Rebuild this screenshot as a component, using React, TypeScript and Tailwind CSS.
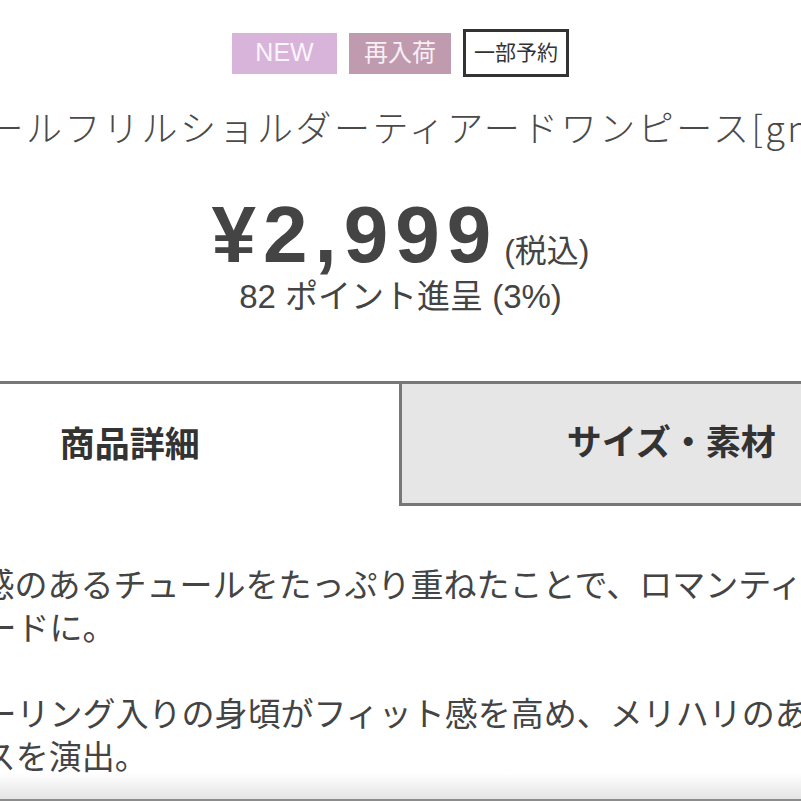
export default function App() {
  const font = { fontFamily: '"Liberation Sans", "Noto Sans CJK JP", sans-serif' };
  return (
    <div className="relative w-[801px] h-[801px] overflow-hidden bg-white flex flex-col items-center" style={font}>
      <div className="w-[1080px] shrink-0 flex flex-col items-center">
        <div className="flex items-center gap-[12px] mt-[29px] h-[48px]">
          <span className="w-[105px] h-[41px] bg-[#d8b3da] text-[#fbf5fc] text-[25px] flex items-center justify-center">NEW</span>
          <span className="w-[102px] h-[41px] bg-[#c09aae] text-[#f7eff3] text-[24px] flex items-center justify-center">再入荷</span>
          <span className="w-[106px] h-[48px] border-[3px] border-[#333] text-[#333] text-[21px] flex items-center justify-center">一部予約</span>
        </div>
        <div
          className="self-stretch pl-[50px] whitespace-nowrap text-[36px] font-light text-[#4a4a4a] leading-[48px] mt-[25px] tracking-[2.5px]"
          style={{ fontFamily: '"Noto Sans CJK JP", sans-serif' }}
        >
          チュールフリルショルダーティアードワンピース[gnc]
        </div>
        <div className="flex items-baseline justify-center mt-[45px] text-[#444]">
          <span className="text-[80px] font-bold leading-[80px] tracking-[7px]">¥2,999</span>
          <span className="text-[32px] ml-[6px]">(税込)</span>
        </div>
        <div className="text-[33px] text-[#444] leading-[40px] mt-[2px]">82 ポイント進呈 (3%)</div>
        <div className="self-stretch flex border-t-[3px] border-[#777] mt-[64px]">
          <div className="flex-1 h-[122px] bg-white flex items-center justify-center text-[35px] font-bold text-[#333]">商品詳細</div>
          <div className="flex-1 h-[122px] bg-[#e6e6e6] border-l-[3px] border-b-[3px] border-[#777] flex items-center justify-center text-[35px] font-bold text-[#333]">サイズ・素材</div>
        </div>
        <div
          className="self-stretch px-[24px] mt-[56px] text-[33px] leading-[43px] text-[#444] whitespace-nowrap"
          style={{ fontFamily: '"Noto Sans CJK JP", sans-serif' }}
        >
          <div>シアー感のあるチュールをたっぷり重ねたことで、ロマンティックで</div>
          <div>甘いムードに。</div>
          <div className="h-[43px]" />
          <div>袖シャーリング入りの身頃がフィット感を高め、メリハリのある</div>
          <div>バランスを演出。</div>
        </div>
      </div>
      <div className="absolute bottom-0 inset-x-0 h-[28px] bg-gradient-to-b from-white/0 to-[#e4e4e4] border-b-2 border-[#8c8c8c]" />
    </div>
  );
}
